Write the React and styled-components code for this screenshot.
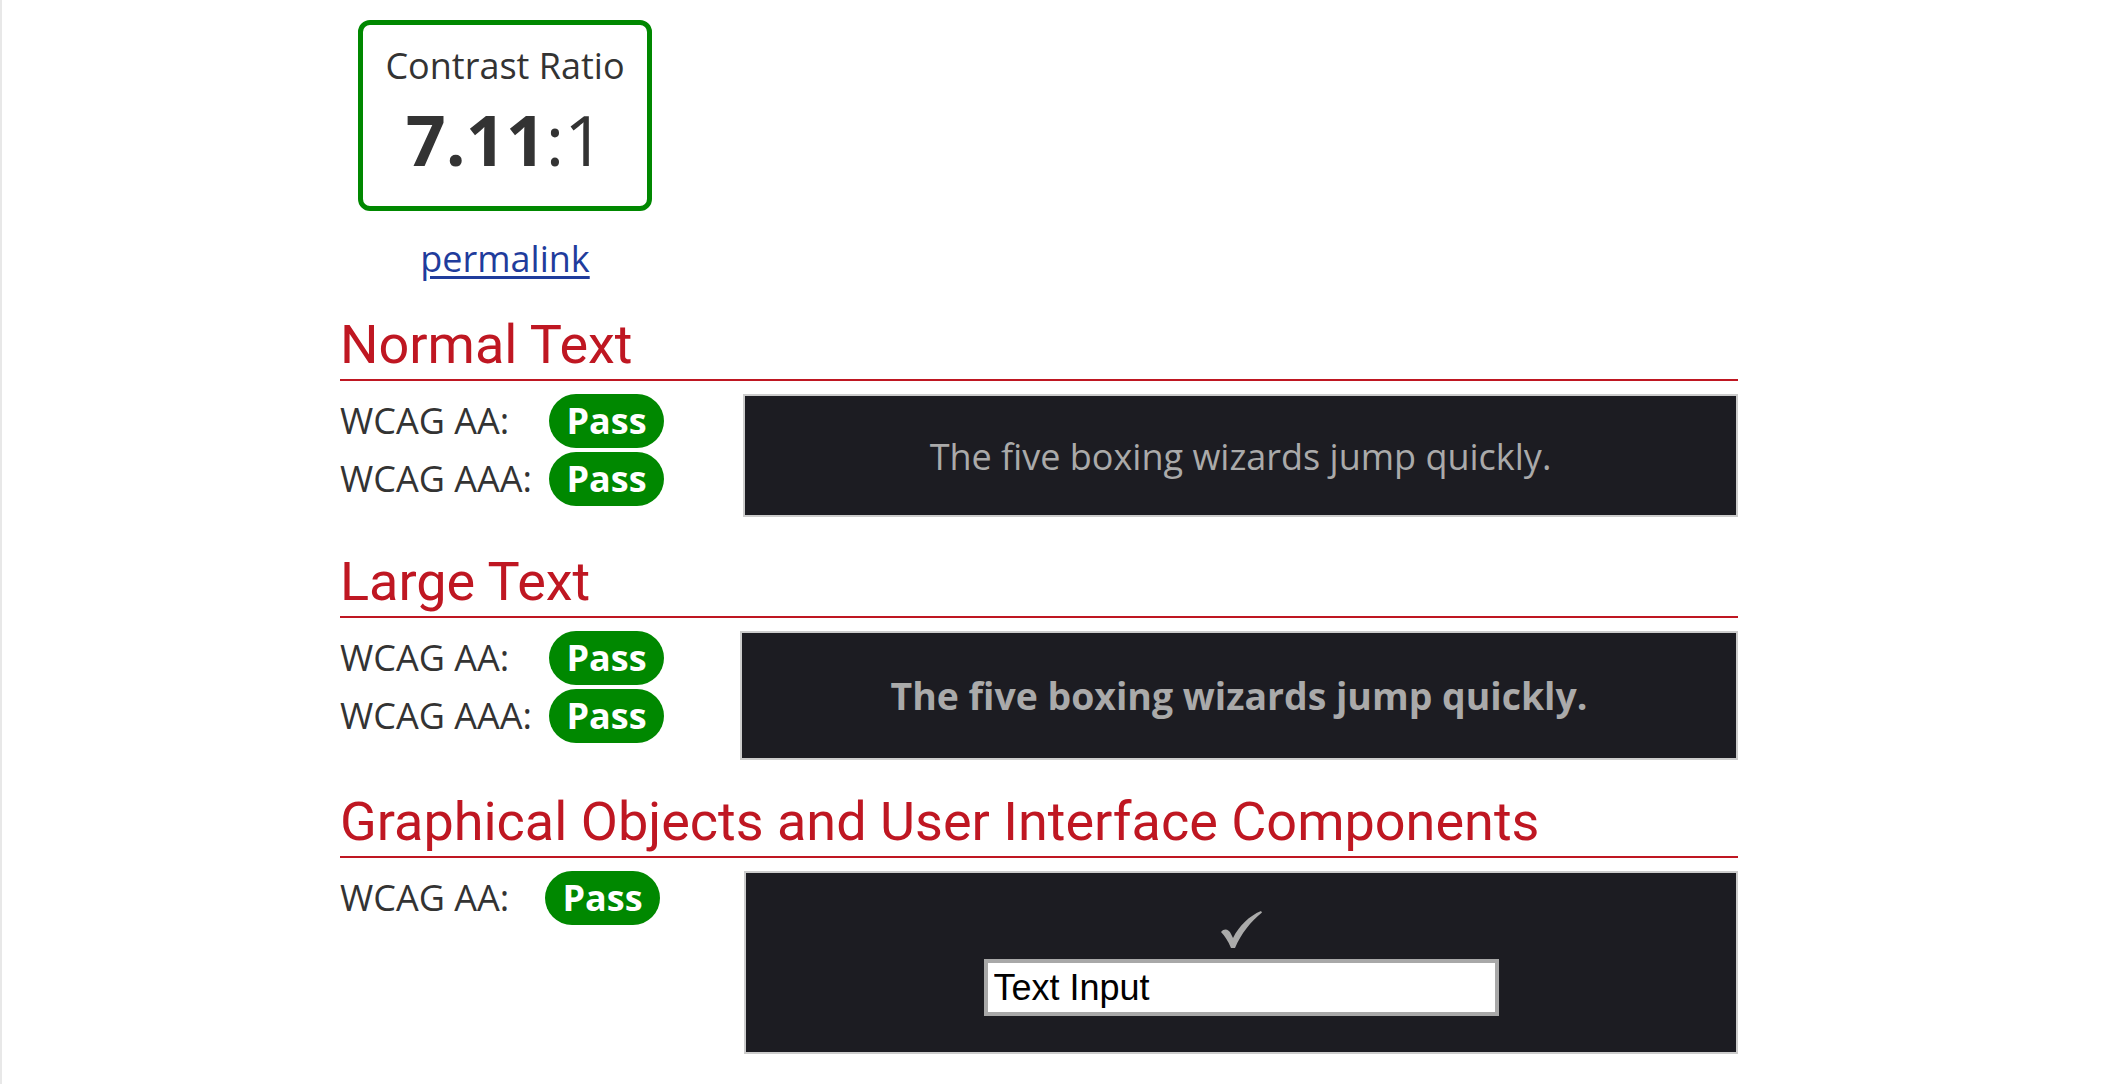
import React from 'react';
import styled, { createGlobalStyle } from 'styled-components';

const GlobalStyle = createGlobalStyle`
  html, body {
    margin: 0;
    padding: 0;
    background: #ffffff;
  }

  body {
    min-height: 100vh;
    border-left: 2px solid #e8e8e8;
    box-sizing: border-box;
    font-family: "Open Sans", "Liberation Sans", sans-serif;
    color: #333333;
  }
`;

const Page = styled.main`
  width: 1398px;
  padding: 20px 0 0 338px;
`;

const Summary = styled.div`
  display: flex;
  flex-direction: column;
  align-items: center;
  width: 330px;
`;

const RatioBox = styled.div`
  box-sizing: border-box;
  width: 294px;
  padding: 17px 0 27px;
  border: 5px solid #008800;
  border-radius: 12px;
  text-align: center;
`;

const RatioLabel = styled.div`
  font-size: 36px;
  line-height: 48px;
  color: #333333;
`;

const RatioValue = styled.div`
  margin-top: 9px;
  font-size: 70px;
  line-height: 80px;
  color: #333333;

  strong {
    font-weight: 700;
  }
`;

const Permalink = styled.a`
  margin-top: 24px;
  font-size: 36px;
  line-height: 48px;
  color: #1f3c9c;
  text-decoration: underline;
  text-underline-offset: 4px;
`;

const Section = styled.section`
  margin-top: ${(p) => p.$gap}px;
`;

const Heading = styled.h2`
  margin: 0 0 13px;
  padding-bottom: 2px;
  border-bottom: 2px solid #bf1722;
  font-family: Roboto, "Liberation Sans", sans-serif;
  font-weight: 400;
  font-size: 54px;
  line-height: 64px;
  color: #bf1722;
`;

const Row = styled.div`
  display: flex;
  align-items: flex-start;
`;

const Results = styled.div`
  display: flex;
  flex-direction: column;
  gap: 4px;
  flex: 0 0 ${(p) => p.$width}px;
`;

const Result = styled.div`
  display: flex;
  align-items: center;
  height: 54px;
`;

const Level = styled.span`
  flex: 0 0 ${(p) => p.$width}px;
  font-size: 36px;
  line-height: 54px;
  color: #333333;
`;

const Badge = styled.span`
  display: inline-flex;
  align-items: center;
  justify-content: center;
  width: 115px;
  height: 54px;
  border-radius: 27px;
  background: #008800;
  color: #ffffff;
  font-weight: 700;
  font-size: 36px;
  line-height: 54px;
`;

const Sample = styled.div`
  flex: 1;
  display: flex;
  flex-direction: column;
  align-items: center;
  justify-content: center;
  padding: ${(p) => (p.$large ? '37px 0 37px' : '36px 0 34px')};
  border: 2px solid #cccccc;
  background: #1c1c22;
  color: #aaaaaa;
  font-size: ${(p) => (p.$large ? 37.4 : 36)}px;
  font-weight: ${(p) => (p.$large ? 700 : 400)};
`;

const ComponentSample = styled(Sample)`
  padding: 38px 0 36px;
`;

const Check = styled.svg`
  display: block;
  width: 42px;
  height: 38px;
  margin-bottom: 10px;
`;

const TextInput = styled.input`
  box-sizing: border-box;
  width: 515px;
  height: 57px;
  padding: 0 6px;
  border: 4px solid #a8a8a8;
  background: #ffffff;
  color: #000000;
  font-family: "Liberation Sans", Arial, sans-serif;
  font-size: 36px;
  outline: none;
`;

const CheckMark = () => (
  <Check viewBox="0 0 42 38" aria-hidden="true">
    <path
      fill="#aaaaaa"
      d="M1 21 C4 17 9 18 11 23 L13 27 C19 15 29 5 41 0 L42 1.5 C31 10 21 23 15 37 L11 37 C8 30 5 25 1 21 Z"
    />
  </Check>
);

const sections = [
  {
    title: 'Normal Text',
    gap: 30,
    aside: 403,
    label: 209,
    levels: ['WCAG AA:', 'WCAG AAA:'],
    kind: 'normal',
  },
  {
    title: 'Large Text',
    gap: 33,
    aside: 400,
    label: 209,
    levels: ['WCAG AA:', 'WCAG AAA:'],
    kind: 'large',
  },
  {
    title: 'Graphical Objects and User Interface Components',
    gap: 30,
    aside: 404,
    label: 205,
    levels: ['WCAG AA:'],
    kind: 'ui',
  },
];

const App = () => (
  <>
    <GlobalStyle />
    <Page>
      <Summary>
        <RatioBox>
          <RatioLabel>Contrast Ratio</RatioLabel>
          <RatioValue>
            <strong>7.11</strong>:1
          </RatioValue>
        </RatioBox>
        <Permalink href="#">permalink</Permalink>
      </Summary>

      {sections.map((s) => (
        <Section key={s.title} $gap={s.gap}>
          <Heading>{s.title}</Heading>
          <Row>
            <Results $width={s.aside}>
              {s.levels.map((level) => (
                <Result key={level}>
                  <Level $width={s.label}>{level}</Level>
                  <Badge>Pass</Badge>
                </Result>
              ))}
            </Results>
            {s.kind === 'ui' ? (
              <ComponentSample>
                <CheckMark />
                <TextInput type="text" defaultValue="Text Input" />
              </ComponentSample>
            ) : (
              <Sample $large={s.kind === 'large'}>
                The five boxing wizards jump quickly.
              </Sample>
            )}
          </Row>
        </Section>
      ))}
    </Page>
  </>
);

export default App;
